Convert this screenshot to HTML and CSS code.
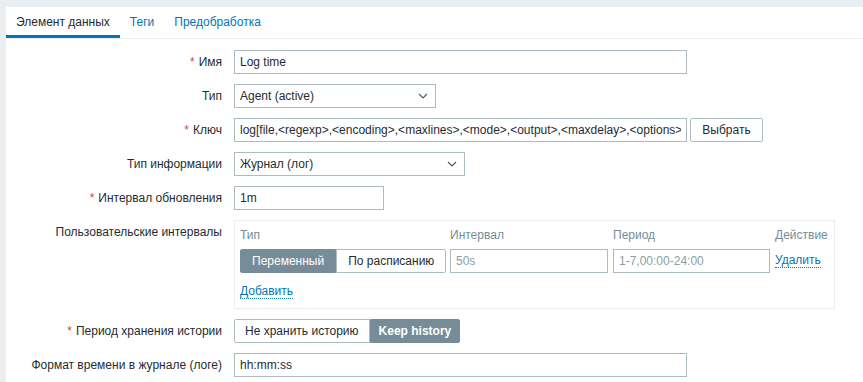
FILE: index.html
```html
<!DOCTYPE html>
<html lang="ru">
<head>
    <meta charset="UTF-8">
    <title>Элемент данных</title>
    <link rel="stylesheet" href="styles.css">
</head>
<body>
    <div class="panel">
        <ul class="tabs">
            <li class="tab active">Элемент данных</li>
            <li class="tab">Теги</li>
            <li class="tab">Предобработка</li>
        </ul>

        <div class="form">
            <label class="label required">Имя</label>
            <div class="field"><input class="text wide" type="text" value="Log time"></div>

            <label class="label">Тип</label>
            <div class="field">
                <div class="select type-select"><span>Agent (active)</span>
                    <svg width="10" height="6" viewBox="0 0 10 6"><path d="M1 1l4 4 4-4" fill="none" stroke="#4f5f68" stroke-width="1.2"/></svg>
                </div>
            </div>

            <label class="label required">Ключ</label>
            <div class="field">
                <input class="text wide" type="text" value="log[file,&lt;regexp&gt;,&lt;encoding&gt;,&lt;maxlines&gt;,&lt;mode&gt;,&lt;output&gt;,&lt;maxdelay&gt;,&lt;options&gt;">
                <button class="btn">Выбрать</button>
            </div>

            <label class="label">Тип информации</label>
            <div class="field">
                <div class="select info-select"><span>Журнал (лог)</span>
                    <svg width="10" height="6" viewBox="0 0 10 6"><path d="M1 1l4 4 4-4" fill="none" stroke="#4f5f68" stroke-width="1.2"/></svg>
                </div>
            </div>

            <label class="label required">Интервал обновления</label>
            <div class="field"><input class="text short" type="text" value="1m"></div>

            <label class="label">Пользовательские интервалы</label>
            <div class="field">
                <div class="intervals">
                    <div class="grid">
                        <div class="th">Тип</div>
                        <div class="th">Интервал</div>
                        <div class="th">Период</div>
                        <div class="th">Действие</div>

                        <div class="segmented roomy">
                            <span class="seg on">Переменный</span><span class="seg">По расписанию</span>
                        </div>
                        <input class="text" type="text" placeholder="50s">
                        <input class="text" type="text" placeholder="1-7,00:00-24:00">
                        <a class="link">Удалить</a>
                    </div>
                    <a class="link add">Добавить</a>
                </div>
            </div>

            <label class="label required">Период хранения истории</label>
            <div class="field">
                <div class="segmented">
                    <span class="seg">Не хранить историю</span><span class="seg on bold">Keep history</span>
                </div>
            </div>

            <label class="label">Формат времени в журнале (логе)</label>
            <div class="field"><input class="text wide" type="text" value="hh:mm:ss"></div>
        </div>
    </div>
</body>
</html>
```

FILE: styles.css
```css
body {
    margin: 0;
    padding: 7px 0 0 6px;
    background-color: #ebeef0;
    font-family: "Liberation Sans", Arial, sans-serif;
    font-size: 12px;
    color: #1f2c33;
}
.panel {
    background-color: #fff;
    height: 400px;
}
.tabs {
    display: flex;
    margin: 0;
    padding: 0;
    list-style: none;
    border-bottom: 1px solid #ebeef0;
}
.tab {
    padding: 8px 10px 6px;
    line-height: 14px;
    color: #0275b8;
    border-bottom: 3px solid transparent;
}
.tab.active {
    color: #1f2c33;
    border-bottom-color: #0275b8;
}
.form {
    display: grid;
    grid-template-columns: 216px 1fr;
    column-gap: 12px;
    row-gap: 10px;
    padding-top: 11px;
}
.label {
    text-align: right;
    line-height: 24px;
    white-space: nowrap;
}
.required::before {
    content: '*';
    color: #e33734;
    margin-right: 4px;
}
.field {
    display: flex;
    align-items: center;
    gap: 3px;
}
.text {
    box-sizing: border-box;
    height: 24px;
    margin: 0;
    padding: 0 5px;
    border: 1px solid #acbbc2;
    background: #fff;
    font-family: inherit;
    font-size: 12px;
    color: #1f2c33;
    outline: none;
}
.text::placeholder {
    color: #8c9ea8;
}
.wide {
    width: 453px;
}
.short {
    width: 150px;
}
.select {
    box-sizing: border-box;
    display: flex;
    align-items: center;
    justify-content: space-between;
    height: 24px;
    padding: 0 7px 0 5px;
    border: 1px solid #acbbc2;
}
.type-select {
    width: 202px;
}
.info-select {
    width: 231px;
}
.btn {
    box-sizing: border-box;
    height: 24px;
    width: 73px;
    margin: 0;
    border: 1px solid #acbbc2;
    border-radius: 2px;
    background: #fff;
    font-family: inherit;
    font-size: 12px;
    color: #1f2c33;
}
.intervals {
    box-sizing: border-box;
    width: 601px;
    padding: 5px 5px 9px;
    border: 1px solid #ebeef0;
}
.grid {
    display: grid;
    grid-template-columns: 205px 158px 157px auto;
    column-gap: 5px;
    row-gap: 5px;
    align-items: center;
}
.th {
    line-height: 18px;
    color: #768d99;
}
.grid .text {
    width: 100%;
}
.segmented {
    display: flex;
}
.seg {
    box-sizing: border-box;
    height: 24px;
    line-height: 22px;
    padding: 0 10px;
    border: 1px solid #acbbc2;
    background: #fff;
    white-space: nowrap;
}
.roomy .seg {
    padding: 0 11px;
}
.seg:first-child {
    border-radius: 2px 0 0 2px;
}
.seg:last-child {
    border-radius: 0 2px 2px 0;
}
.seg.on {
    background: #768d99;
    border-color: #768d99;
    color: #fff;
}
.bold {
    font-weight: bold;
    padding: 0 8px;
}
.link {
    color: #0275b8;
    text-decoration: none;
    border-bottom: 1px dotted #0275b8;
    line-height: 13px;
    justify-self: start;
}
.add {
    display: inline-block;
    margin-top: 12px;
}
```
